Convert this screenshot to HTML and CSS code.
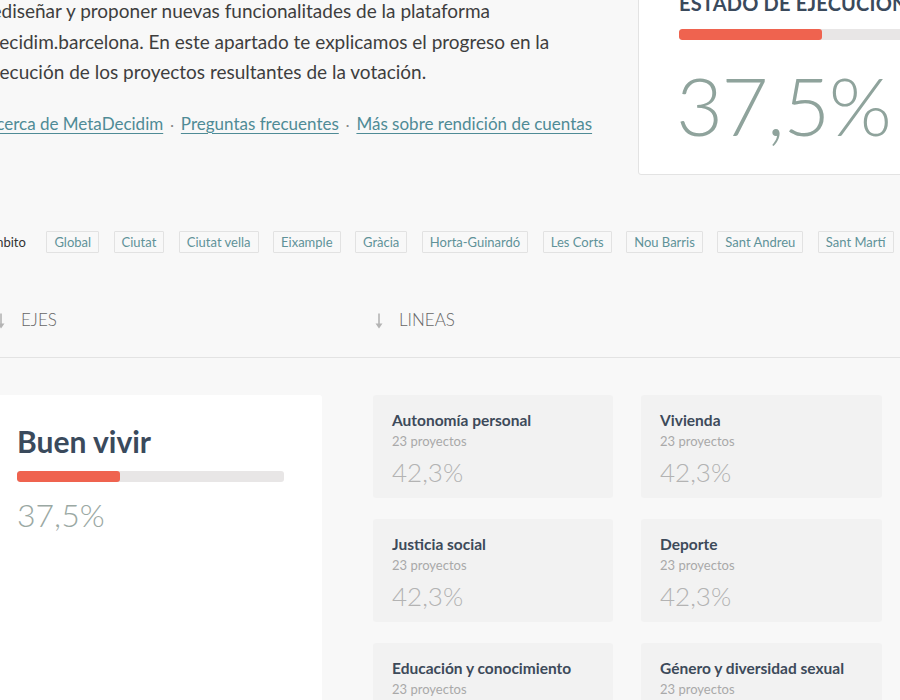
FILE: index.html
```html
<!DOCTYPE html>
<html lang="es">
<head>
<meta charset="utf-8">
<title>Rendición de cuentas</title>
<link rel="stylesheet" href="styles.css">
</head>
<body>
<div class="page">
  <section class="intro">
    <div class="intro-text">
      <p class="lead">rediseñar y proponer nuevas funcionalitades de la plataforma<br>Decidim.barcelona. En este apartado te explicamos el progreso en la<br>ejecución de los proyectos resultantes de la votación.</p>
      <p class="links"><a href="#">Acerca de MetaDecidim</a><span class="sep">·</span><a href="#">Preguntas frecuentes</a><span class="sep">·</span><a href="#">Más sobre rendición de cuentas</a></p>
    </div>
    <div class="status-card">
      <h2 class="status-title">ESTADO DE EJECUCIÓN</h2>
      <div class="bar bar-big"><div class="fill" style="width:37.5%"></div></div>
      <div class="status-value">37,5%</div>
    </div>
  </section>

  <section class="filters">
    <span class="filter-label">Ámbito</span>
    <a class="tag" href="#">Global</a>
    <a class="tag" href="#">Ciutat</a>
    <a class="tag" href="#">Ciutat vella</a>
    <a class="tag" href="#">Eixample</a>
    <a class="tag" href="#">Gràcia</a>
    <a class="tag" href="#">Horta-Guinardó</a>
    <a class="tag" href="#">Les Corts</a>
    <a class="tag" href="#">Nou Barris</a>
    <a class="tag" href="#">Sant Andreu</a>
    <a class="tag" href="#">Sant Martí</a>
  </section>

  <section class="heads">
    <div class="head head-left">
      <svg class="arrow" width="10" height="16" viewBox="0 0 10 16"><path d="M5 0.5V12" stroke="#b4b4b4" stroke-width="1.6" fill="none"/><path d="M1.5 10.5L5 15.5L8.5 10.5Z" fill="#b4b4b4"/></svg>
      <span>EJES</span>
    </div>
    <div class="head head-right">
      <svg class="arrow" width="10" height="16" viewBox="0 0 10 16"><path d="M5 0.5V12" stroke="#b4b4b4" stroke-width="1.6" fill="none"/><path d="M1.5 10.5L5 15.5L8.5 10.5Z" fill="#b4b4b4"/></svg>
      <span>LINEAS</span>
    </div>
  </section>

  <section class="content">
    <div class="axis-card">
      <h3 class="axis-title">Buen vivir</h3>
      <div class="bar bar-axis"><div class="fill" style="width:38.5%"></div></div>
      <div class="axis-value">37,5%</div>
    </div>
    <div class="lines">
      <div class="line-card"><div class="line-title">Autonomía personal</div><div class="line-count">23 proyectos</div><div class="line-value">42,3%</div></div>
      <div class="line-card"><div class="line-title">Vivienda</div><div class="line-count">23 proyectos</div><div class="line-value">42,3%</div></div>
      <div class="line-card"><div class="line-title">Justicia social</div><div class="line-count">23 proyectos</div><div class="line-value">42,3%</div></div>
      <div class="line-card"><div class="line-title">Deporte</div><div class="line-count">23 proyectos</div><div class="line-value">42,3%</div></div>
      <div class="line-card"><div class="line-title">Educación y conocimiento</div><div class="line-count">23 proyectos</div><div class="line-value">42,3%</div></div>
      <div class="line-card"><div class="line-title">Género y diversidad sexual</div><div class="line-count">23 proyectos</div><div class="line-value">42,3%</div></div>
    </div>
  </section>
</div>
</body>
</html>
```

FILE: styles.css
```css
html, body {
  margin: 0;
  padding: 0;
}
body {
  background: #f8f8f8;
  font-family: Lato, "Open Sans", "Liberation Sans", sans-serif;
  color: #3d3d3d;
  overflow: hidden;
  width: 900px;
  height: 700px;
}
.page {
  margin-top: -48px;
  margin-left: -21px;
  width: 1100px;
}
.intro {
  display: flex;
  align-items: flex-start;
}
.intro-text {
  width: 653px;
  padding-top: 44px;
  padding-left: 6px;
  flex: none;
}
.lead {
  margin: 0;
  font-size: 19px;
  line-height: 30.5px;
  color: #3e3e3e;
}
.links {
  margin: 26px 0 0;
  font-size: 17px;
  line-height: 20px;
  color: #777;
}
.links a {
  color: #4f8b96;
  text-decoration: underline;
  text-underline-offset: 3px;
  text-decoration-thickness: 1px;
}
.links .sep {
  margin: 0 7px;
  color: #888;
  font-size: 14px;
}
.status-card {
  background: #fff;
  border: 1px solid #e3e3e3;
  border-radius: 3px;
  padding: 38px 40px 20px;
  width: 380px;
  flex: none;
}
.status-title {
  margin: 0;
  font-size: 20px;
  font-weight: 700;
  color: #3a4a5c;
  letter-spacing: 0.2px;
  line-height: 24px;
}
.bar {
  background: #e8e6e6;
  border-radius: 3px;
  overflow: hidden;
}
.bar .fill {
  height: 100%;
  background: #ef634f;
  border-radius: 3px;
}
.bar-big {
  height: 11px;
  margin-top: 14px;
}
.status-value {
  font-size: 81px;
  font-weight: 300;
  line-height: 100px;
  color: #8fa39c;
  margin-top: 15px;
  margin-left: -3px;
  margin-bottom: -1px;
  letter-spacing: -1.5px;
}

.filters {
  display: flex;
  align-items: center;
  gap: 14.5px;
  margin-top: 56px;
}
.filter-label {
  font-size: 13px;
  color: #333;
  margin-right: 6px;
  margin-left: 5px;
}
.tag {
  display: inline-block;
  height: 20px;
  line-height: 20px;
  padding: 0 7px;
  font-size: 13px;
  color: #5f9298;
  border: 1px solid #e2e2e2;
  background: #f8f8f8;
  text-decoration: none;
  border-radius: 1px;
}

.heads {
  display: flex;
  margin-top: 57px;
  height: 47px;
  border-bottom: 1px solid #e3e3e3;
  width: 1000px;
}
.head {
  display: flex;
  align-items: flex-start;
  gap: 15px;
  font-size: 17px;
  font-weight: 300;
  color: #666;
  line-height: 20px;
}
.head .arrow {
  margin-top: 3px;
}
.head-left {
  width: 334px;
  padding-left: 17px;
  flex: none;
}
.head-right {
  padding-left: 44px;
}

.content {
  display: flex;
  gap: 51px;
  margin-top: 37px;
}
.axis-card {
  background: #fff;
  border-radius: 3px;
  width: 267px;
  padding: 28px 38px 0;
  height: 320px;
  flex: none;
}
.axis-title {
  margin: 0;
  font-size: 30px;
  font-weight: 700;
  color: #3a4a5c;
  line-height: 36px;
}
.bar-axis {
  height: 11px;
  margin-top: 12px;
}
.axis-value {
  font-size: 32px;
  font-weight: 300;
  color: #9aa8a3;
  line-height: 40px;
  margin-top: 13px;
}
.lines {
  display: grid;
  grid-template-columns: 240px 241px;
  column-gap: 28px;
  row-gap: 21px;
}
.line-card {
  background: #f2f2f2;
  border-radius: 3px;
  height: 103px;
  padding: 15px 19px 0;
  box-sizing: border-box;
}
.line-title {
  font-size: 15.5px;
  font-weight: 700;
  color: #3d4a5a;
  line-height: 20px;
}
.line-count {
  font-size: 13px;
  color: #a9a9a9;
  line-height: 16px;
  margin-top: 3px;
}
.line-value {
  font-size: 26px;
  font-weight: 300;
  color: #b3b3b3;
  line-height: 32px;
  margin-top: 7px;
}
```
